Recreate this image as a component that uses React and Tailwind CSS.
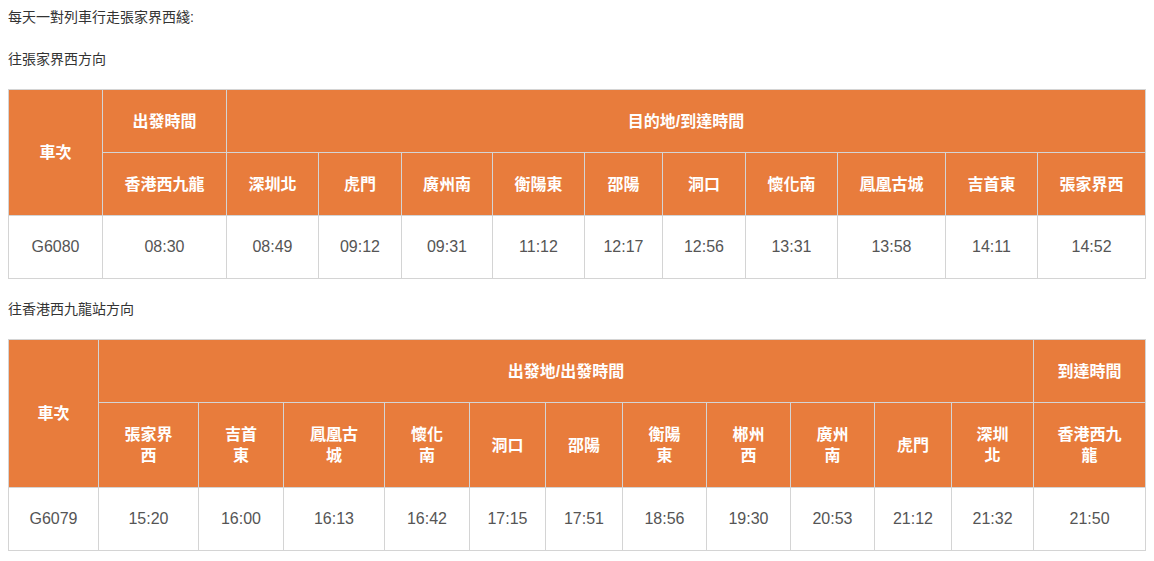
const southbound = {
  cols: [94, 124, 92, 83, 91, 92, 78, 83, 92, 108, 92, 108],
  stations: ["香港西九龍", "深圳北", "虎門", "廣州南", "衡陽東", "邵陽", "洞口", "懷化南", "鳳凰古城", "吉首東", "張家界西"],
  train: "G6080",
  times: ["08:30", "08:49", "09:12", "09:31", "11:12", "12:17", "12:56", "13:31", "13:58", "14:11", "14:52"],
};

const northbound = {
  cols: [90, 100, 85, 101, 85, 76, 77, 84, 84, 84, 77, 82, 112],
  stations: [
    ["張家界", "西"],
    ["吉首", "東"],
    ["鳳凰古", "城"],
    ["懷化", "南"],
    ["洞口"],
    ["邵陽"],
    ["衡陽", "東"],
    ["郴州", "西"],
    ["廣州", "南"],
    ["虎門"],
    ["深圳", "北"],
    ["香港西九", "龍"],
  ],
  train: "G6079",
  times: ["15:20", "16:00", "16:13", "16:42", "17:15", "17:51", "18:56", "19:30", "20:53", "21:12", "21:32", "21:50"],
};

const th = "border border-[#d4d4d4] bg-[#e87c3c] text-white font-bold text-[16px] leading-[21px] text-center align-middle p-0";
const td = "border border-[#d4d4d4] bg-white text-[#555] text-[16px] text-center align-middle p-0";

const SouthTable = () => (
  <table className="table-fixed border-collapse w-[1138px]">
    <colgroup>
      {southbound.cols.map((w, i) => (
        <col key={i} style={{ width: w }} />
      ))}
    </colgroup>
    <thead>
      <tr className="h-[63px]">
        <th rowSpan={2} className={th}>車次</th>
        <th className={th}>出發時間</th>
        <th colSpan={10} className={th}>目的地/到達時間</th>
      </tr>
      <tr className="h-[63px]">
        {southbound.stations.map((s) => (
          <th key={s} className={th}>{s}</th>
        ))}
      </tr>
    </thead>
    <tbody>
      <tr className="h-[63px]">
        <td className={td}>{southbound.train}</td>
        {southbound.times.map((t, i) => (
          <td key={i} className={td}>{t}</td>
        ))}
      </tr>
    </tbody>
  </table>
);

const NorthTable = () => (
  <table className="table-fixed border-collapse w-[1138px]">
    <colgroup>
      {northbound.cols.map((w, i) => (
        <col key={i} style={{ width: w }} />
      ))}
    </colgroup>
    <thead>
      <tr className="h-[63px]">
        <th rowSpan={2} className={th}>車次</th>
        <th colSpan={11} className={th}>出發地/出發時間</th>
        <th className={th}>到達時間</th>
      </tr>
      <tr className="h-[85px]">
        {northbound.stations.map((s, i) => (
          <th key={i} className={th}>
            {s[0]}
            {s[1] && (
              <>
                <br />
                {s[1]}
              </>
            )}
          </th>
        ))}
      </tr>
    </thead>
    <tbody>
      <tr className="h-[63px]">
        <td className={td}>{northbound.train}</td>
        {northbound.times.map((t, i) => (
          <td key={i} className={td}>{t}</td>
        ))}
      </tr>
    </tbody>
  </table>
);

export default function App() {
  return (
    <div className="bg-white min-h-screen px-2 pt-[7px] font-['Liberation_Sans','Noto_Sans_CJK_TC',sans-serif] text-[#333] text-[14px] leading-[20px]">
      <p>每天一對列車行走張家界西綫:</p>
      <p className="mt-[22px]">往張家界西方向</p>
      <div className="mt-[20px]">
        <SouthTable />
      </div>
      <p className="mt-[20px]">往香港西九龍站方向</p>
      <div className="mt-[20px]">
        <NorthTable />
      </div>
    </div>
  );
}
